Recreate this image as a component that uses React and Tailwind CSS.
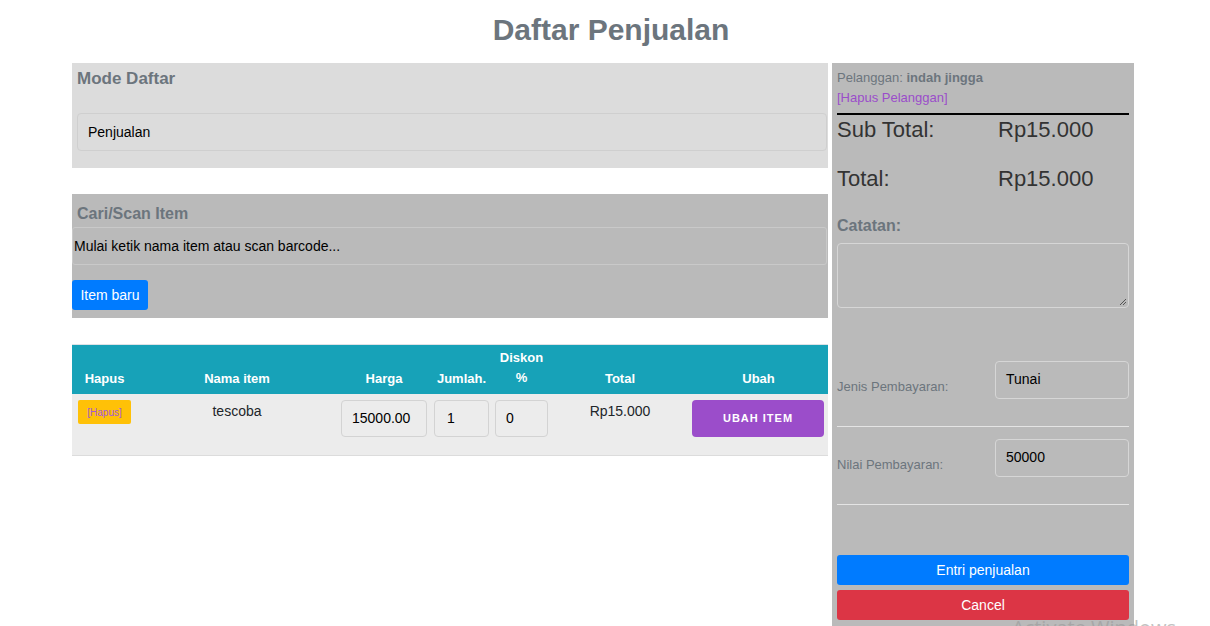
import React from 'react';

const font = { fontFamily: '"Liberation Sans", Arial, sans-serif' };

const App = () => {
  return (
    <div className="relative min-h-[626px] bg-white text-black overflow-hidden" style={font}>
      <h1 className="text-center text-[30px] font-bold text-[#6c757d] leading-none pt-[15px] pb-[18px] pl-[12px]">
        Daftar Penjualan
      </h1>

      <div className="flex gap-[4px] pl-[72px]">
        {/* Left column */}
        <div className="w-[756px] flex flex-col">
          <div className="bg-[#dcdcdc] h-[105px] pl-[5px] pr-[1px] pt-[6px]">
            <h4 className="text-[17px] font-bold text-[#6c757d] leading-5">Mode Daftar</h4>
            <div className="mt-[24px] h-[38px] border border-[#cfcfcf] rounded-[4px] flex items-center px-[10px] text-[14px]">
              Penjualan
            </div>
          </div>

          <div className="bg-[#bababa] h-[124px] mt-[26px] pt-[12px]">
            <h5 className="text-[16px] font-bold text-[#6c757d] leading-4 px-[5px]">Cari/Scan Item</h5>
            <div className="mt-[5px] mr-[1px] h-[38px] border border-[#c9c9c9] rounded-[3px] flex items-center px-[1px] text-[14px]">
              Mulai ketik nama item atau scan barcode...
            </div>
            <button className="mt-[15px] bg-[#007bff] text-white text-[14px] h-[30px] w-[76px] rounded-[3px]">
              Item baru
            </button>
          </div>

          <div className="mt-[26px] border-t border-[#dee2e6]">
            <div className="grid grid-cols-[65px_200px_94px_61px_59px_138px_139px] bg-[#17a2b8] h-[49px] text-white text-[13px] font-bold text-center">
              <div className="self-end pb-[6px]">Hapus</div>
              <div className="self-end pb-[6px]">Nama item</div>
              <div className="self-end pb-[6px]">Harga</div>
              <div className="self-end pb-[6px]">Jumlah.</div>
              <div className="self-end pb-[6px] leading-[20px]">
                <div>Diskon</div>
                <div>%</div>
              </div>
              <div className="self-end pb-[6px]">Total</div>
              <div className="self-end pb-[6px]">Ubah</div>
            </div>
            <div className="grid grid-cols-[65px_200px_94px_61px_59px_138px_139px] bg-[#ececec] h-[62px] border-b border-[#dcdcdc] text-[14px] pt-[6px]">
              <div className="pl-[6px]">
                <button className="bg-[#ffc107] rounded-[2px] w-[53px] h-[24px] text-[10px] text-[#a259d9]">[Hapus]</button>
              </div>
              <div className="text-center text-[14px] text-[#212529] pt-[1px]">tescoba</div>
              <div className="px-[4px]">
                <div className="h-[37px] border border-[#d3d3d3] rounded-[4px] flex items-center px-[10px]">15000.00</div>
              </div>
              <div className="px-[3px]">
                <div className="h-[37px] border border-[#d3d3d3] rounded-[4px] flex items-center px-[12px]">1</div>
              </div>
              <div className="px-[3px]">
                <div className="h-[37px] border border-[#d3d3d3] rounded-[4px] flex items-center px-[10px]">0</div>
              </div>
              <div className="text-center text-[#212529] pt-[1px]">Rp15.000</div>
              <div className="pl-[3px] pr-[4px]">
                <button className="w-full h-[37px] bg-[#9b4dca] rounded-[4px] text-white text-[11px] font-bold tracking-[1px] uppercase">
                  Ubah item
                </button>
              </div>
            </div>
          </div>
        </div>

        {/* Right column */}
        <div className="w-[302px] bg-[#bababa] min-h-[563px] px-[5px] pt-[5px] flex flex-col">
          <div className="text-[13px] text-[#6c757d] leading-[20px]">
            Pelanggan: <span className="font-bold">indah jingga</span>
          </div>
          <div className="text-[13px] text-[#9b4dca] leading-[20px]">[Hapus Pelanggan]</div>
          <div className="mt-[5px] h-[2px] bg-black" />
          <div className="grid grid-cols-[161px_1fr] text-[22px] text-[#333] leading-[30px]">
            <div>Sub Total:</div>
            <div>Rp15.000</div>
          </div>
          <div className="grid grid-cols-[161px_1fr] text-[22px] text-[#333] leading-[30px] mt-[19px]">
            <div>Total:</div>
            <div>Rp15.000</div>
          </div>
          <div className="mt-[22px] text-[16px] font-bold text-[#6c757d] leading-5">Catatan:</div>
          <div className="relative mt-[7px] h-[65px] border border-[#d6d6d6] rounded-[4px]">
            <svg className="absolute right-[1px] bottom-[1px]" width="9" height="9" viewBox="0 0 9 9">
              <path d="M8 2L2 8M8 5L5 8" stroke="#555" strokeWidth="1" />
            </svg>
          </div>

          <div className="mt-[53px] grid grid-cols-[158px_1fr] items-center">
            <div className="text-[13px] text-[#6c757d] pt-[14px]">Jenis Pembayaran:</div>
            <div className="h-[38px] border border-[#d6d6d6] rounded-[4px] flex items-center px-[10px] text-[14px] pb-[2px]">Tunai</div>
          </div>
          <div className="mt-[27px] h-px bg-[#e4e4e4]" />
          <div className="mt-[12px] grid grid-cols-[158px_1fr] items-center">
            <div className="text-[13px] text-[#6c757d] pt-[14px]">Nilai Pembayaran:</div>
            <div className="h-[38px] border border-[#d6d6d6] rounded-[4px] flex items-center px-[10px] text-[14px] pb-[2px]">50000</div>
          </div>
          <div className="mt-[27px] h-px bg-[#e4e4e4]" />

          <button className="mt-[50px] h-[30px] bg-[#007bff] text-white text-[14px] rounded-[3px]">Entri penjualan</button>
          <button className="mt-[5px] h-[30px] bg-[#dc3545] text-white text-[14px] rounded-[3px]">Cancel</button>
        </div>
      </div>

      <div className="absolute left-[1012px] top-[616px] text-[20px] leading-[24px] text-[#9a9a9a] opacity-60 pointer-events-none" style={{ fontFamily: '"Open Sans", sans-serif' }}>
        Activate Windows
      </div>
    </div>
  );
};

export default App;
